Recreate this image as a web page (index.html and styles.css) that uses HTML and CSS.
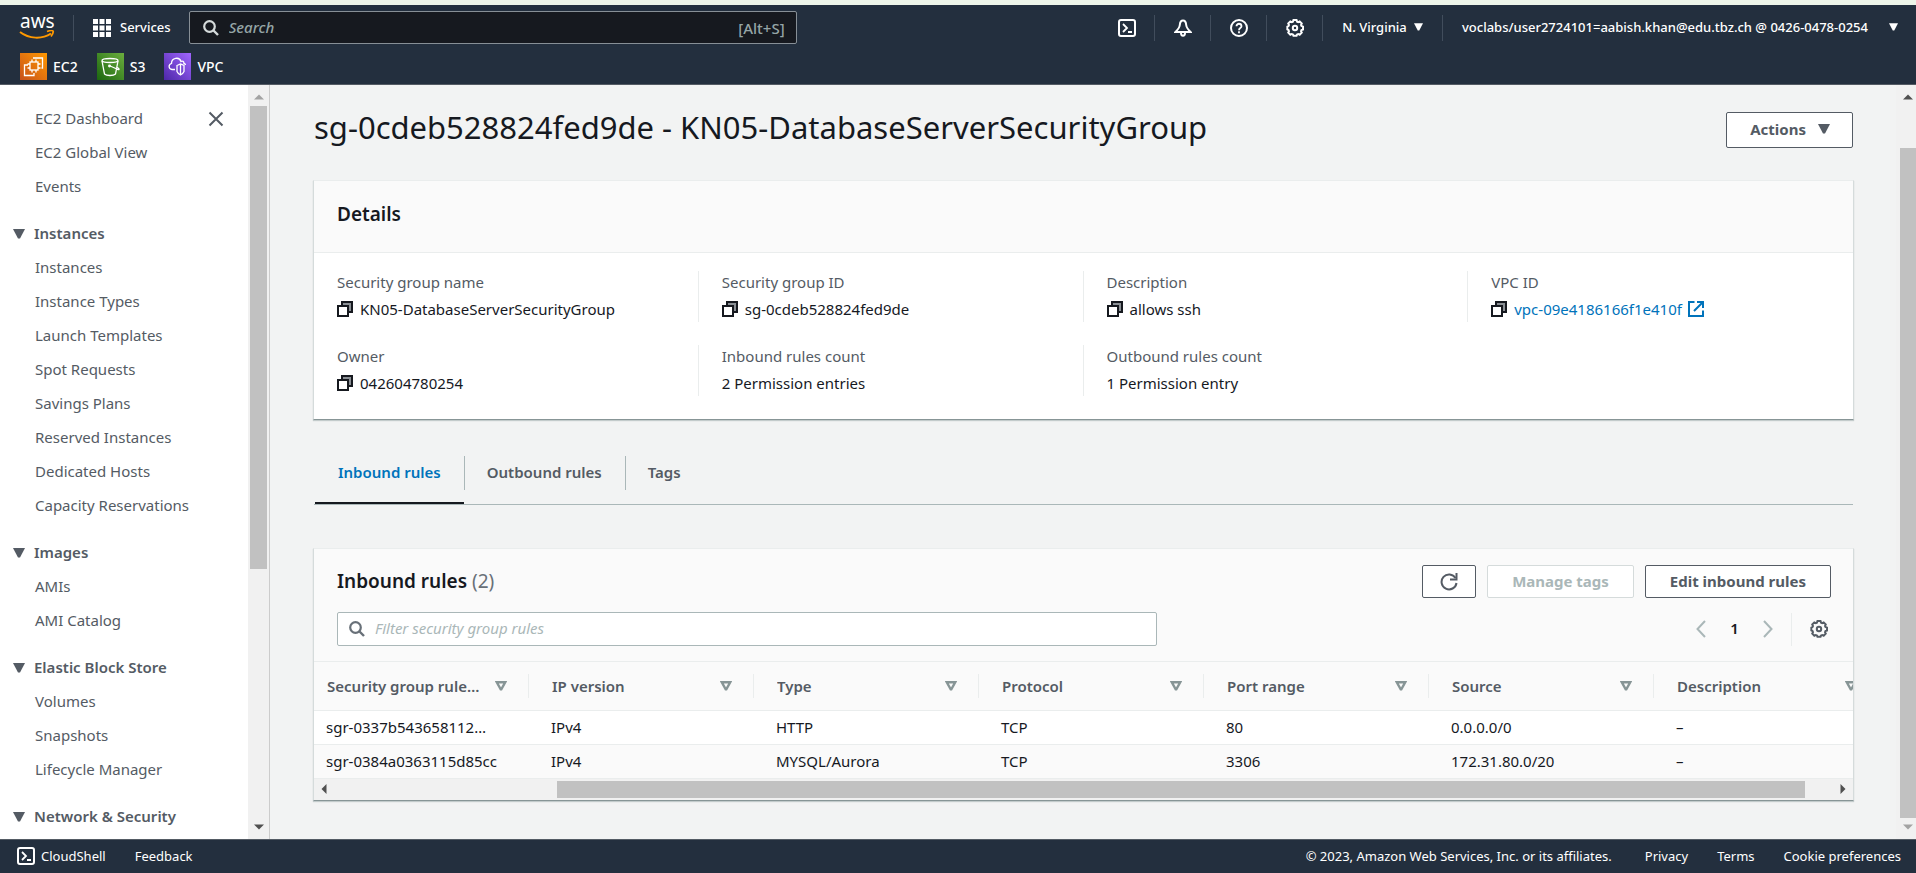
FILE: index.html
```
<!DOCTYPE html>
<html lang="en">
<head>
<meta charset="utf-8">
<title>Security group details | EC2</title>
<link rel="stylesheet" href="styles.css">
</head>
<body>
<svg class="sprite" aria-hidden="true">
  <defs>
    <linearGradient id="orange" x1="0" y1="1" x2="1" y2="0"><stop offset="0" stop-color="#c8511b"/><stop offset="1" stop-color="#ff9900"/></linearGradient>
    <linearGradient id="green" x1="0" y1="1" x2="1" y2="0"><stop offset="0" stop-color="#1b660f"/><stop offset="1" stop-color="#6cae3e"/></linearGradient>
    <linearGradient id="purple" x1="0" y1="1" x2="1" y2="0"><stop offset="0" stop-color="#4d27a8"/><stop offset="1" stop-color="#a166ff"/></linearGradient>
    <symbol id="copy" viewBox="0 0 16 16"><path d="M5 5V1h10v10h-4" fill="#8a8f94" stroke="currentColor" stroke-width="2"/><rect x="1" y="5" width="10" height="10" fill="#fff" stroke="currentColor" stroke-width="2"/></symbol>
    <symbol id="search" viewBox="0 0 16 16"><circle cx="6.500" cy="6.500" r="5.300" fill="none" stroke="currentColor" stroke-width="2.200"/><path d="M10 10l5 5" stroke="currentColor" stroke-width="2.400"/></symbol>
    <symbol id="down" viewBox="0 0 12 10"><path d="M0 0h12L7 9.500H5z" fill="currentColor"/></symbol>
    <symbol id="sort" viewBox="0 0 12 10"><path d="M1.800 1.300h8.400L6.300 8.300h-.6z" fill="none" stroke="currentColor" stroke-width="2.400"/></symbol>
    <symbol id="shell" viewBox="0 0 18 18"><rect x="1" y="1" width="16" height="16" rx="2" fill="none" stroke="currentColor" stroke-width="2"/><path d="M5 5l4 4-4 4M10 13h4" fill="none" stroke="currentColor" stroke-width="1.800"/></symbol>
    <symbol id="gear" viewBox="0 0 18 18"><path d="M7.300 1h3.400l.6 1.700 1.300.5 1.600-.8 2.300 2.400-.8 1.600.5 1.200 1.700.6v3.200l-1.700.6-.5 1.300.8 1.600-2.300 2.300-1.600-.8-1.300.5-.6 1.600H7.300l-.6-1.600-1.300-.5-1.600.8-2.300-2.300.8-1.600-.5-1.300-1.300-.6V8.200l1.300-.6.5-1.200-.8-1.600 2.300-2.400 1.600.8 1.300-.5z" transform="translate(.9 .2) scale(.9)" fill="none" stroke="currentColor" stroke-width="2.200"/><circle cx="9" cy="9" r="2.200" fill="none" stroke="currentColor" stroke-width="2"/></symbol>
    <symbol id="tri" viewBox="0 0 10 6"><path d="M0 5.500L5 .5l5 5z" fill="currentColor"/></symbol>
    <symbol id="prev" viewBox="0 0 10 18"><path d="M9 1L1.500 9 9 17" fill="none" stroke="currentColor" stroke-width="2"/></symbol>
  </defs>
</svg>
<div class="strip"></div>
<header class="topbar">
  <div class="top-row">
    <a class="logo" href="#"><span class="logo-text">aws</span><svg class="smile" viewBox="0 0 36 10"><path d="M1 2c9 7 22 7.500 31 1.500" fill="none" stroke="#f90" stroke-width="2"/><path d="M28 1.500c3-1 5.500-1 6-.5s-.2 3-2 5.500" fill="none" stroke="#f90" stroke-width="1.700"/></svg></a>
    <button class="services" type="button"><svg class="i18" viewBox="0 0 18 18" fill="#fff"><path d="M0 0h5v5H0zM6.500 0h5v5h-5zM13 0h5v5h-5zM0 6.500h5v5H0zM6.500 6.500h5v5h-5zM13 6.500h5v5h-5zM0 13h5v5H0zM6.500 13h5v5h-5zM13 13h5v5h-5z"/></svg>Services</button>
    <label class="global-search"><svg class="i16"><use href="#search"/></svg><input type="search" placeholder="Search" aria-label="Search"><span class="hint">[Alt+S]</span></label>
    <div class="tools">
      <button class="tool" type="button" aria-label="CloudShell"><svg class="i18"><use href="#shell"/></svg></button>
      <button class="tool" type="button" aria-label="Notifications"><svg class="i18" viewBox="0 0 18 18" fill="none" stroke="#fff" stroke-width="2"><path d="M9 1.500c-2 0-3 1.800-3.200 4.500C5.500 9 4 10.500 1.500 13h15C14 10.500 12.500 9 12.200 6 12 3.300 11 1.500 9 1.500z"/><path d="M7 14c0 3.500 4 3.500 4 0"/></svg></button>
      <button class="tool" type="button" aria-label="Help"><svg class="i18" viewBox="0 0 18 18" fill="none" stroke="#fff" stroke-width="2"><circle cx="9" cy="9" r="8"/><path d="M6.500 7.200c0-3.300 5-3.300 5 0 0 2-2.500 1.800-2.500 4M9 12.300v2" stroke-width="1.800"/></svg></button>
      <button class="tool" type="button" aria-label="Settings"><svg class="i18"><use href="#gear"/></svg></button>
      <button class="tool region" type="button">N. Virginia<svg class="caret"><use href="#down"/></svg></button>
      <button class="tool account" type="button">voclabs/user2724101=aabish.khan@edu.tbz.ch @ 0426-0478-0254<svg class="caret"><use href="#down"/></svg></button>
    </div>
  </div>
  <nav class="favorites" aria-label="Favorites">
    <a href="#"><svg class="i27" viewBox="0 0 27 27"><path fill="url(#orange)" d="M0 0h27v27H0z"/><g fill="none" stroke="#fff" stroke-width="1.300"><rect x="10" y="9" width="8" height="8"/><path d="M12 6.500V9m4-2.500V9m-4 8v2.500m4-2.500v2.500M7.500 11H10m-2.500 4H10m8-4h2.500M18 15h2.500M13 5h9.500v10h-1M8 12H4.500v10.500H14V20"/></g></svg>EC2</a>
    <a href="#"><svg class="i27" viewBox="0 0 27 27"><path fill="url(#green)" d="M0 0h27v27H0z"/><g fill="none" stroke="#fff" stroke-width="1.300"><ellipse cx="13" cy="7.500" rx="8" ry="2"/><path d="M5 8l2.500 13c2 2 9 2 11 0L21 8M12 12.500l9 4c2 .5 1-1.500-1.500-2.500"/><circle cx="12.500" cy="13" r=".8"/></g></svg>S3</a>
    <a href="#"><svg class="i27" viewBox="0 0 27 27"><path fill="url(#purple)" d="M0 0h27v27H0z"/><g fill="none" stroke="#fff" stroke-width="1.300"><path d="M11 16.500H8c-3.500-.5-4-5-.5-6 0-6 8-7 9.500-2 1.500-1 3 0 3 2 1 .2 1.500.8 1.500 1.500"/><path d="M13 12.500l3.500-1.500 3.500 1.500v6c-1 2-2 3-3.500 3.500-1.500-.5-2.500-1.500-3.500-3.500zM16.500 11v11"/></g></svg>VPC</a>
  </nav>
</header>

<div class="body">
  <aside class="sidebar">
    <nav class="nav" aria-label="EC2">
      <button class="close" type="button" aria-label="Close navigation"><svg class="i16" viewBox="0 0 16 16"><path d="M1.500 1.500l13 13M14.500 1.500l-13 13" stroke="currentColor" stroke-width="2"/></svg></button>
      <ul>
        <li><a href="#">EC2 Dashboard</a></li><li><a href="#">EC2 Global View</a></li><li><a href="#">Events</a></li>
      </ul>
      <button class="section" type="button"><svg class="caret12"><use href="#down"/></svg>Instances</button>
      <ul>
        <li><a href="#">Instances</a></li><li><a href="#">Instance Types</a></li><li><a href="#">Launch Templates</a></li><li><a href="#">Spot Requests</a></li><li><a href="#">Savings Plans</a></li><li><a href="#">Reserved Instances</a></li><li><a href="#">Dedicated Hosts</a></li><li><a href="#">Capacity Reservations</a></li>
      </ul>
      <button class="section" type="button"><svg class="caret12"><use href="#down"/></svg>Images</button>
      <ul>
        <li><a href="#">AMIs</a></li><li><a href="#">AMI Catalog</a></li>
      </ul>
      <button class="section" type="button"><svg class="caret12"><use href="#down"/></svg>Elastic Block Store</button>
      <ul>
        <li><a href="#">Volumes</a></li><li><a href="#">Snapshots</a></li><li><a href="#">Lifecycle Manager</a></li>
      </ul>
      <button class="section" type="button"><svg class="caret12"><use href="#down"/></svg>Network &amp; Security</button>
    </nav>
    <div class="vscroll" aria-hidden="true">
      <svg class="arrow faint"><use href="#tri"/></svg>
      <div class="track"><div class="thumb nav-thumb"></div></div>
      <svg class="arrow flip"><use href="#tri"/></svg>
    </div>
  </aside>

  <main class="main">
    <div class="title-row">
      <h1>sg-0cdeb528824fed9de - KN05-DatabaseServerSecurityGroup</h1>
      <button class="btn actions" type="button">Actions<svg class="caret12"><use href="#down"/></svg></button>
    </div>

    <section class="card">
      <h2 class="card-head">Details</h2>
      <dl class="details">
        <div><dt>Security group name</dt><dd><svg class="i16"><use href="#copy"/></svg>KN05-DatabaseServerSecurityGroup</dd></div>
        <div><dt>Security group ID</dt><dd><svg class="i16"><use href="#copy"/></svg>sg-0cdeb528824fed9de</dd></div>
        <div><dt>Description</dt><dd><svg class="i16"><use href="#copy"/></svg>allows ssh</dd></div>
        <div><dt>VPC ID</dt><dd><svg class="i16"><use href="#copy"/></svg><a href="#">vpc-09e4186166f1e410f<svg class="i16" viewBox="0 0 16 16"><path d="M6.500 1H1v14h14V9.500M9 1h6v6M15 1L6 10" fill="none" stroke="currentColor" stroke-width="2"/></svg></a></dd></div>
        <div><dt>Owner</dt><dd><svg class="i16"><use href="#copy"/></svg>042604780254</dd></div>
        <div><dt>Inbound rules count</dt><dd>2 Permission entries</dd></div>
        <div><dt>Outbound rules count</dt><dd>1 Permission entry</dd></div>
      </dl>
    </section>

    <div class="tabs" role="tablist">
      <button class="tab selected" type="button" role="tab" aria-selected="true">Inbound rules</button>
      <button class="tab" type="button" role="tab">Outbound rules</button>
      <button class="tab" type="button" role="tab">Tags</button>
    </div>

    <section class="card">
      <div class="rules-head">
        <div class="rules-row">
          <h2>Inbound rules <span class="count">(2)</span></h2>
          <div class="buttons">
            <button class="btn icon-btn" type="button" aria-label="Refresh"><svg class="i18" viewBox="0 0 18 18"><path d="M16.500 10A7.500 7.500 0 1 1 15.500 5" fill="none" stroke="currentColor" stroke-width="2"/><path d="M16.500 0v6.500H10" fill="none" stroke="currentColor" stroke-width="2"/></svg></button>
            <button class="btn" type="button" disabled>Manage tags</button>
            <button class="btn" type="button">Edit inbound rules</button>
          </div>
        </div>
        <div class="rules-row">
          <label class="filter"><svg class="i16"><use href="#search"/></svg><input type="search" placeholder="Filter security group rules" aria-label="Filter security group rules"></label>
          <div class="pager">
            <button class="page-arrow" type="button" aria-label="Previous page"><svg class="chev"><use href="#prev"/></svg></button>
            <span class="page">1</span>
            <button class="page-arrow" type="button" aria-label="Next page"><svg class="chev mirror"><use href="#prev"/></svg></button>
            <button class="prefs" type="button" aria-label="Preferences"><svg class="i18"><use href="#gear"/></svg></button>
          </div>
        </div>
      </div>
      <div class="table-wrap">
        <table>
          <colgroup><col class="first"><col><col><col><col><col><col></colgroup>
          <thead>
            <tr>
              <th><div class="th"><span>Security group rule…</span><svg class="caret12"><use href="#sort"/></svg></div></th>
              <th><div class="th"><span>IP version</span><svg class="caret12"><use href="#sort"/></svg></div></th>
              <th><div class="th"><span>Type</span><svg class="caret12"><use href="#sort"/></svg></div></th>
              <th><div class="th"><span>Protocol</span><svg class="caret12"><use href="#sort"/></svg></div></th>
              <th><div class="th"><span>Port range</span><svg class="caret12"><use href="#sort"/></svg></div></th>
              <th><div class="th"><span>Source</span><svg class="caret12"><use href="#sort"/></svg></div></th>
              <th><div class="th"><span>Description</span><svg class="caret12"><use href="#sort"/></svg></div></th>
            </tr>
          </thead>
          <tbody>
            <tr><td>sgr-0337b543658112…</td><td>IPv4</td><td>HTTP</td><td>TCP</td><td>80</td><td>0.0.0.0/0</td><td>–</td></tr>
            <tr><td>sgr-0384a0363115d85cc</td><td>IPv4</td><td>MYSQL/Aurora</td><td>TCP</td><td>3306</td><td>172.31.80.0/20</td><td>–</td></tr>
          </tbody>
        </table>
      </div>
      <div class="hscroll" aria-hidden="true">
        <svg class="arrow left"><use href="#tri"/></svg>
        <div class="htrack"><div class="hthumb"></div></div>
        <svg class="arrow right"><use href="#tri"/></svg>
      </div>
    </section>
  </main>

  <div class="vscroll page-scroll" aria-hidden="true">
    <svg class="arrow"><use href="#tri"/></svg>
    <div class="track"><div class="thumb page-thumb"></div></div>
    <svg class="arrow flip faint"><use href="#tri"/></svg>
  </div>
</div>

<footer class="footer">
  <button class="foot-btn" type="button"><svg class="i18"><use href="#shell"/></svg>CloudShell</button>
  <a href="#">Feedback</a>
  <span class="copyright">© 2023, Amazon Web Services, Inc. or its affiliates.</span>
  <a href="#">Privacy</a>
  <a href="#">Terms</a>
  <a href="#">Cookie preferences</a>
</footer>
</body>
</html>
```
FILE: styles.css
```
* { box-sizing: border-box; }

body {
  margin: 0;
  height: 100vh;
  display: flex;
  flex-direction: column;
  overflow: hidden;
  background: #f2f3f3;
  color: #16191f;
  font: 15px/24px "Noto Sans", "Open Sans", sans-serif;
}

button { font: inherit; color: inherit; background: none; border: 0; padding: 0; cursor: pointer; }
input { font: inherit; color: inherit; background: none; border: 0; outline: 0; padding: 0; min-width: 0; flex: 1; }
input::placeholder { font-style: italic; opacity: 1; }
a { color: inherit; text-decoration: none; }
h1, h2, ul, dl, dd { margin: 0; padding: 0; }
ul { list-style: none; }
svg { flex: none; display: block; }

.sprite { position: absolute; width: 0; height: 0; }
.i16 { width: 16px; height: 16px; }
.i18 { width: 18px; height: 18px; }
.i27 { width: 27px; height: 27px; }
.caret { width: 9px; height: 8px; }
.caret12 { width: 12px; height: 10px; }

/* Header */
.strip { flex: none; height: 5px; background: #edf5e9; }
.topbar {
  flex: none;
  background: #232f3e;
  color: #fff;
  font-size: 13px;
  font-weight: 500;
  border-bottom: 1px solid #545b64;
  padding-bottom: 4px;
}
.top-row { display: flex; align-items: center; height: 45px; padding: 0 18px 0 19px; }
.logo { width: 55px; height: 26px; border-right: 1px solid #414d5c; }
.logo-text { display: block; height: 15px; font-size: 19px; font-weight: 400; line-height: 12px; padding-left: 1px; }
.smile { width: 36px; height: 10px; }
.services { display: flex; align-items: center; gap: 9px; padding: 0 18px 2px 19px; }
.services svg { margin-top: 2px; }
.global-search {
  display: flex;
  align-items: center;
  gap: 10px;
  flex: 0 1 608px;
  height: 33px;
  padding: 0 11px 0 13px;
  background: #16191f;
  border: 1px solid #878f96;
  border-radius: 2px;
  color: #d5dbdb;
  font-size: 15px;
}
.global-search input { padding-bottom: 2px; }
.global-search input::placeholder { color: #95a5a6; }
.hint { color: #95a5a6; }
.tools { display: flex; align-items: center; margin-left: auto; }
.tool { display: flex; align-items: center; justify-content: center; height: 26px; width: 56px; border-right: 1px solid #414d5c; white-space: nowrap; gap: 7px; }
.region { width: 120px; padding-bottom: 2px; }
.account { width: 455px; justify-content: space-between; border: 0; padding: 0 0 2px 19px; }
.favorites { display: flex; gap: 19px; padding: 3px 20px 0; font-size: 14px; }
.favorites a { display: flex; align-items: center; gap: 6px; }

/* Body */
.body { flex: 1; min-height: 0; display: flex; }
.sidebar { flex: none; width: 270px; display: flex; background: #fff; border-right: 1px solid #ccc; }
.nav { position: relative; flex: 1; padding-top: 16px; color: #545b64; overflow: hidden; }
.nav li { height: 34px; padding-left: 35px; line-height: 34px; }
.close { position: absolute; right: 24px; top: 26px; }
.section { display: flex; align-items: center; gap: 9px; height: 34px; margin-top: 13px; padding-left: 13px; font-weight: 600; }
.section svg { margin-top: 2px; }

.vscroll { flex: none; width: 21px; display: flex; flex-direction: column; align-items: center; background: #f1f1f1; padding: 9px 2px 9px 2px; color: #505050; }
.track { flex: 1; width: 100%; margin: 6px 0; }
.thumb { background: #c1c1c1; }
.nav-thumb { height: 65%; }
.arrow { width: 10px; height: 6px; }
.flip { transform: scaleY(-1); }
.faint { color: #a3a3a3; }
.page-scroll { width: 20px; padding-right: 0; padding-left: 4px; }
.page-scroll .track { padding-top: 42px; }
.page-thumb { height: 100%; }

.main { flex: 1; min-width: 0; padding: 27px 43px 0 44px; }
.title-row { display: flex; align-items: flex-start; justify-content: space-between; margin-bottom: 32px; }
h1 { font-size: 31px; line-height: 30px; font-weight: 400; }

.btn {
  display: flex;
  align-items: center;
  justify-content: center;
  height: 33px;
  padding: 0 24px 2px;
  border: 1px solid #545b64;
  border-radius: 2px;
  background: #fff;
  color: #545b64;
  font-weight: 700;
  white-space: nowrap;
}
.btn:disabled { color: #aab7b8; border-color: #d5dbdb; }
.actions { height: 36px; gap: 12px; padding: 0 22px 2px 23px; }
.icon-btn { padding: 0 17px; }

.card {
  margin: 0 -1px;
  background: #fff;
  border: 1px solid #d5dbdb;
  border-top-color: #eaeded;
  border-bottom-color: #879596;
  box-shadow: 0 1px 1px #c3cbcb;
}
h2 { font-size: 19px; line-height: 24px; font-weight: 600; }
.card-head { padding: 21px 23px 26px; background: #fafafa; border-bottom: 1px solid #eaeded; }
.details { display: grid; grid-template-columns: repeat(4, 1fr); row-gap: 23px; padding: 18px 0 23px; }
.details > div { height: 51px; padding-left: 23px; border-right: 1px solid #eaeded; }
.details > div:nth-child(4), .details > div:nth-child(7) { border-right: 0; }
dt { color: #545b64; line-height: 22px; }
dd { display: flex; align-items: center; gap: 7px; line-height: 32px; }
.details a { display: flex; align-items: center; gap: 6px; color: #0073bb; }

.tabs { display: flex; margin: 25px 0 43px; padding-left: 1px; border-bottom: 1px solid #aab7b8; color: #545b64; }
.tab { position: relative; height: 59px; padding: 0 23px 6px; font-weight: 600; }
.tab + .tab::before { content: ""; position: absolute; left: 0; top: 11px; height: 34px; border-left: 1px solid #aab7b8; }
.selected { color: #0073bb; border-bottom: 2px solid #16191f; padding-bottom: 4px; }

.rules-head { display: flex; flex-direction: column; gap: 14px; padding: 16px 22px 15px 23px; background: #fafafa; border-bottom: 1px solid #eaeded; }
.rules-row { display: flex; align-items: center; justify-content: space-between; }
.rules-row h2 { padding-bottom: 2px; }
.count { color: #687078; font-weight: 400; }
.buttons { display: flex; gap: 11px; }
.filter { display: flex; align-items: center; gap: 10px; flex: 0 1 820px; height: 34px; padding: 0 11px; background: #fff; border: 1px solid #aab7b8; border-radius: 2px; color: #687078; }
.filter input { padding-bottom: 2px; }
.filter input::placeholder { color: #aab7b8; }
.pager { display: flex; align-items: center; color: #aab7b8; }
.chev { width: 10px; height: 18px; }
.mirror { transform: scaleX(-1); }
.page { width: 57px; padding-bottom: 2px; text-align: center; color: #16191f; font-weight: 600; }
.prefs { height: 33px; margin-left: 18px; padding: 0 3px 0 18px; border-left: 1px solid #eaeded; color: #545b64; }

.table-wrap { overflow: hidden; }
table { width: 1565px; table-layout: fixed; border-collapse: collapse; }
.first { width: 215px; }
th, td { text-align: left; white-space: nowrap; }
th { height: 48px; padding: 0 0 0 23px; background: #fafafa; color: #545b64; font-weight: 600; border-bottom: 1px solid #eaeded; }
td { height: 34px; padding: 0 0 0 22px; border-bottom: 1px solid #eaeded; }
th:first-child { padding-left: 13px; }
td:first-child { padding-left: 12px; }
tbody tr:last-child { background: #fafafa; }
.th { display: flex; align-items: center; justify-content: space-between; gap: 8px; padding-right: 21px; border-right: 1px solid #eaeded; }
.th span { overflow: hidden; text-overflow: ellipsis; }
.th svg { color: #879596; }

.hscroll { display: flex; align-items: center; height: 21px; padding: 0 5px; background: #f1f1f1; color: #505050; }
.htrack { flex: 1; padding: 0 3px; }
.hthumb { width: 83%; height: 17px; margin-left: 15%; background: #c1c1c1; }
.left { transform: rotate(-90deg); }
.right { transform: rotate(90deg); }

/* Footer */
.footer {
  flex: none;
  display: flex;
  align-items: center;
  gap: 29px;
  height: 34px;
  padding: 0 15px 1px 17px;
  background: #232f3e;
  border-top: 1px solid #545b64;
  color: #fff;
  font-size: 13px;
  font-weight: 400;
  white-space: nowrap;
}
.foot-btn { display: flex; align-items: center; gap: 6px; }
.copyright { margin-left: auto; padding-right: 4px; }
```
